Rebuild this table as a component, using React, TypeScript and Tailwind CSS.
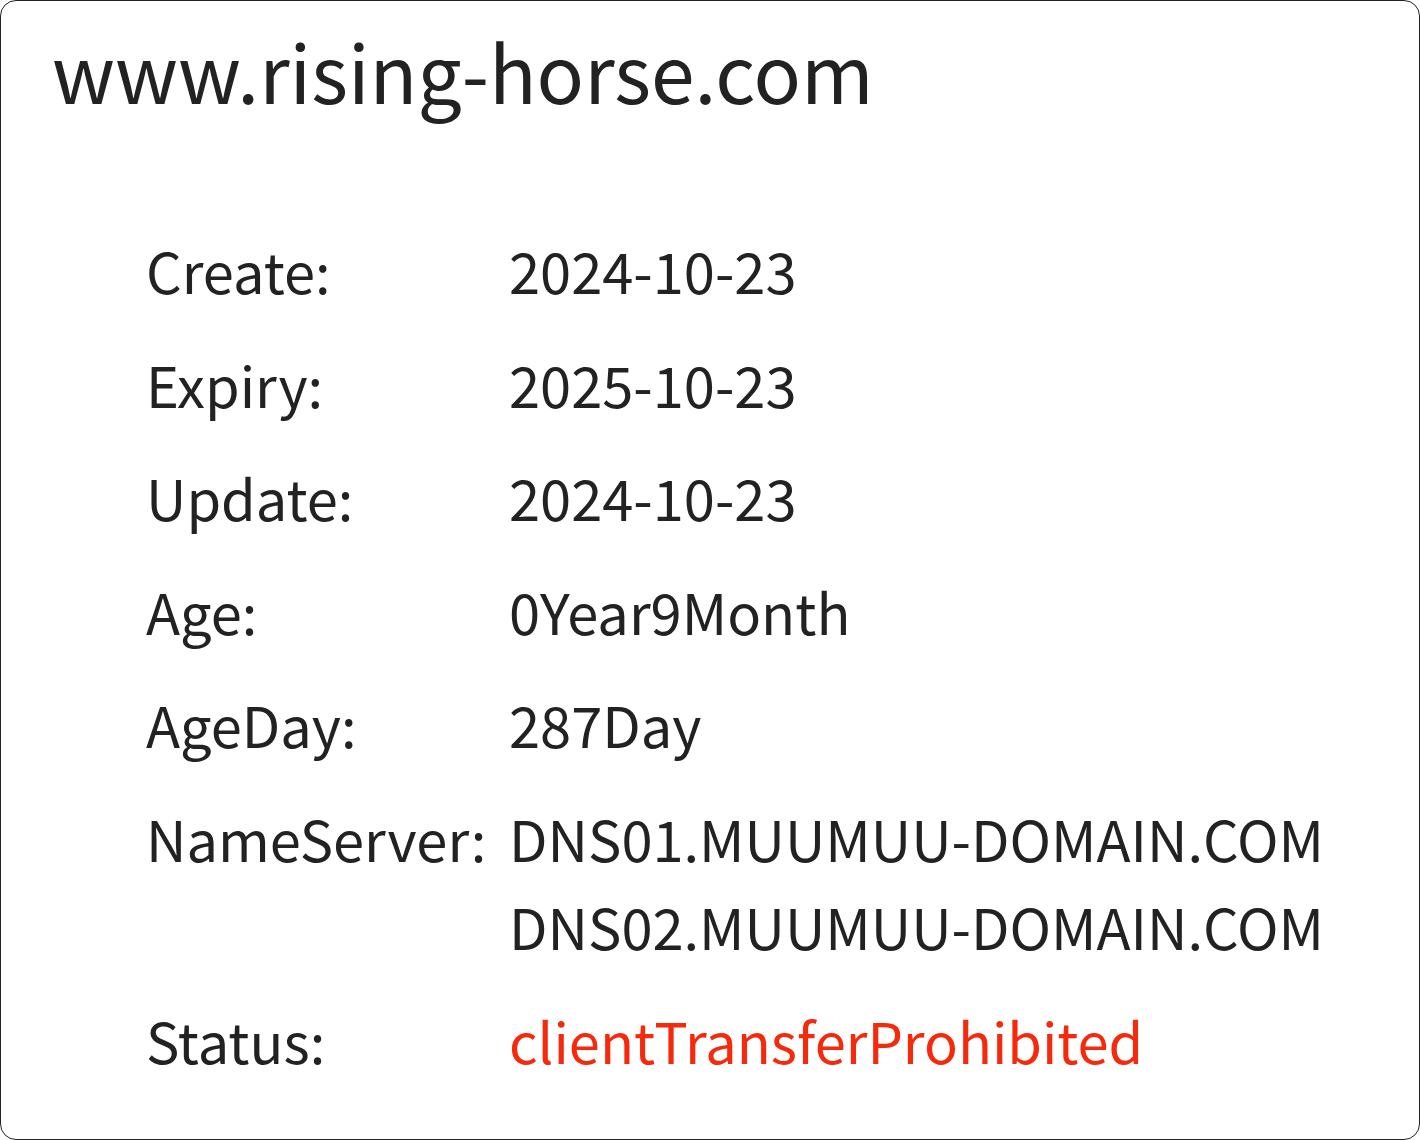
import React from 'react';

const rows: { label: string; values: string[]; red?: boolean }[] = [
  { label: 'Create:', values: ['2024-10-23'] },
  { label: 'Expiry:', values: ['2025-10-23'] },
  { label: 'Update:', values: ['2024-10-23'] },
  { label: 'Age:', values: ['0Year9Month'] },
  { label: 'AgeDay:', values: ['287Day'] },
  { label: 'NameServer:', values: ['DNS01.MUUMUU-DOMAIN.COM', 'DNS02.MUUMUU-DOMAIN.COM'] },
  { label: 'Status:', values: ['clientTransferProhibited'], red: true },
];

const App: React.FC = () => {
  return (
    <div
      className="w-[1420px] h-[1140px] bg-white text-[#222222]"
      style={{ fontFamily: '"Noto Sans CJK JP", "Noto Sans", sans-serif' }}
    >
      <div className="h-full border border-[#222222] rounded-2xl px-[51px] pt-[22px]">
        <h1 className="text-[78.5px] leading-[94px] font-normal">www.rising-horse.com</h1>
        <div className="mt-[109px] pl-[94px] flex flex-col gap-[25.6px]">
          {rows.map(row => (
            <div key={row.label} className="flex text-[56px] leading-[88px]">
              <div className="w-[363px] shrink-0">{row.label}</div>
              <div className="flex flex-col whitespace-nowrap">
                {row.values.map(v => (
                  <div key={v} className={row.red ? 'text-[#f52a0c]' : ''}>{v}</div>
                ))}
              </div>
            </div>
          ))}
        </div>
      </div>
    </div>
  );
};

export default App;
